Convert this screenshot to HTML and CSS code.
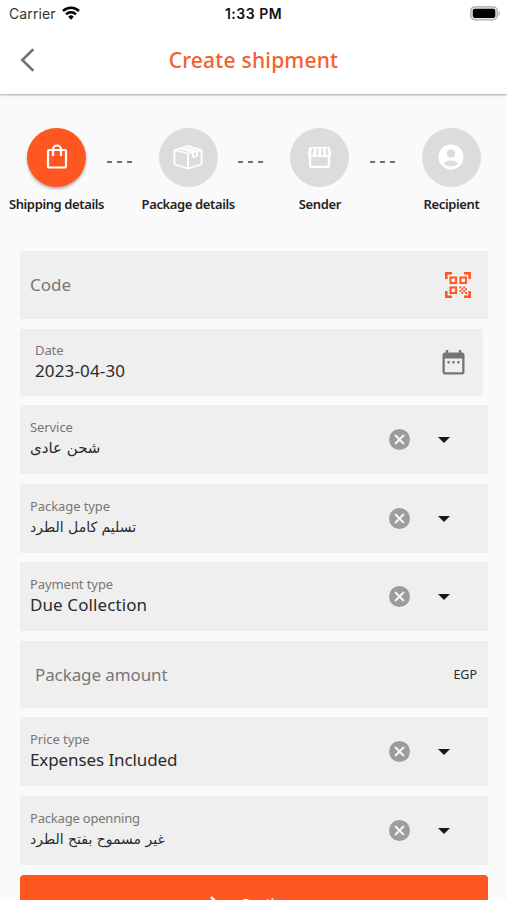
FILE: index.html
```html
<!DOCTYPE html>
<html lang="en">
<head>
<meta charset="utf-8">
<title>Create shipment</title>
<link rel="stylesheet" href="styles.css">
</head>
<body>
<svg class="defs" aria-hidden="true">
  <symbol id="clear" viewBox="2 2 20 20"><path fill="#9c9c9c" d="M12 2a10 10 0 1 0 0 20 10 10 0 0 0 0-20Z"/><path d="m7.800 7.800 8.400 8.400m0-8.400-8.400 8.400" stroke="#f5f5f5" stroke-width="2"/></symbol>
  <symbol id="caret" viewBox="0 0 12 6"><path fill="#171717" d="M0 0h12L6 6Z"/></symbol>
</svg>
<header class="top">
  <div class="status">
    <div class="carrier"><span class="carrier-name">Carrier</span>
      <svg class="wifi" viewBox="0 0 18 14"><g fill="none" stroke="#000" stroke-width="2.500"><path d="M1 5a11.400 11.400 0 0 1 16 0"/><path d="M4 8.300a7.200 7.200 0 0 1 10 0"/></g><path d="M6.200 10.700a4 4 0 0 1 5.600 0L9 13.700Z"/></svg>
    </div>
    <span class="clock">1:33 PM</span>
    <svg class="battery" viewBox="0 0 31 15"><rect x=".8" y=".8" width="26.400" height="13" rx="4" fill="#e8e8e8" stroke="#aaa" stroke-width="1.300"/><rect x="2.800" y="2.700" width="22.500" height="9.300" rx="2"/><path d="M28.500 5a3 3 0 0 1 0 5Z" fill="#aaa"/></svg>
  </div>
  <div class="bar">
    <svg class="back" viewBox="0 0 15 24"><path d="M13.300 1.200 2.300 12l11 10.800" fill="none" stroke="#757575" stroke-width="2.700"/></svg>
    <h1 class="title">Create shipment</h1>
  </div>
</header>
<main>
  <nav class="steps">
    <div class="step">
      <div class="disc active"><svg class="icon bag" viewBox="0 0 28 28"><g fill="none" stroke="#fff" stroke-width="2.200"><rect x="5" y="8" width="18" height="17.500" rx="1"/><path d="M10 14V7.500a4 4 0 0 1 8 0V14"/></g></svg></div>
      <span class="caption c1">Shipping details</span>
    </div>
    <div class="dashes"><i></i><i></i><i></i></div>
    <div class="step">
      <div class="disc"><svg class="icon wide" viewBox="0 0 30 28"><path d="m1.500 7 13.500-4 13.500 4v14.500L15 25.500 1.500 21.500Zm0 0L15 10.500 28.500 7M15 10.500v15M6.500 5.500l13.500 3.500v5l4-1.200V8L10.500 4.300" fill="none" stroke="#fff" stroke-width="1.800" stroke-linejoin="round"/></svg></div>
      <span class="caption c2">Package details</span>
    </div>
    <div class="dashes"><i></i><i></i><i></i></div>
    <div class="step">
      <div class="disc"><svg class="icon store" viewBox="0 0 28 28"><path d="M5 3.500h18.500q1.500 0 1.500 1.500l1 6q.3 3-2.500 3h-19Q1.700 14 2 11l1-6q0-1.500 2-1.500Z" fill="#fff"/><path d="m7.200 6-1 5.500M12 6l-.5 5.500M16.500 6l.5 5.500M21.300 6l1 5.500" stroke="#dcdcdc" stroke-width="2.100" stroke-linecap="round"/><path d="M4.200 13v10q0 1.300 1.300 1.300h17q1.300 0 1.300-1.300V13" fill="none" stroke="#fff" stroke-width="2.400"/></svg></div>
      <span class="caption c3">Sender</span>
    </div>
    <div class="dashes"><i></i><i></i><i></i></div>
    <div class="step">
      <div class="disc"><svg class="icon person" viewBox="0 0 28 28"><circle cx="14" cy="14" r="12.500" fill="#fff"/><circle cx="14" cy="10.500" r="4.200" fill="#dcdcdc"/><ellipse cx="14" cy="20.500" rx="6.800" ry="2.900" fill="#dcdcdc"/></svg></div>
      <span class="caption c4">Recipient</span>
    </div>
  </nav>
  <form class="form">
    <div class="field code"><span class="hint h-code">Code</span>
      <svg class="qr" viewBox="0 0 26 26"><g fill="none" stroke="#ff5722" stroke-width="2"><path stroke-width="2.600" d="M1.300 7V1.300H7M19 1.300h5.700V7M1.300 19v5.700H7M19 24.700h5.700V19"/><path d="M5.500 5.500h5.600v5.600H5.500Zm9.900 0H21v5.600h-5.600ZM5.500 15.400h5.600V21H5.500Z"/></g><path fill="#ff5722" d="M14.400 14.400h1.900v1.900h-1.900Zm3.800 0h1.900v1.900h-1.900Zm-1.900 1.900h1.900v1.900h-1.900Zm3.800 0H22v1.900h-1.900Zm-5.700 1.900h1.900v1.900h-1.900Zm3.800 0h1.900v1.900h-1.900Zm-1.900 1.900h1.900V22h-1.900Zm3.800 0H22V22h-1.900Z"/></svg></div>
    <div class="field date"><div class="text"><span class="label l-date">Date</span><span class="value v-date">2023-04-30</span></div>
      <svg class="cal" viewBox="0 0 23 25"><path fill="#757575" fill-rule="evenodd" d="M3.800 0h2.400v2.400h10.600V0h2.400v2.400h1.300Q22.500 2.400 22.500 5v17q0 2.500-2.500 2.500H3Q.5 24.500.5 22V5Q.5 2.400 3 2.400h.8ZM2.800 8.500v13.700h17.400V8.500Z"/><path fill="#757575" d="M5.500 11h2.200v2.400H5.500Zm4.900 0h2.200v2.400h-2.200Zm4.900 0h2.200v2.400h-2.200Z"/></svg></div>
    <div class="field service"><div class="text"><span class="label l-service">Service</span><span class="value arabic a-service" lang="ar" dir="rtl">شحن عادى</span></div><svg class="clear"><use href="#clear"/></svg><svg class="caret"><use href="#caret"/></svg></div>
    <div class="field package"><div class="text"><span class="label l-package">Package type</span><span class="value arabic a-package" lang="ar" dir="rtl">تسليم كامل الطرد</span></div><svg class="clear"><use href="#clear"/></svg><svg class="caret"><use href="#caret"/></svg></div>
    <div class="field payment"><div class="text"><span class="label l-payment">Payment type</span><span class="value v-payment">Due Collection</span></div><svg class="clear"><use href="#clear"/></svg><svg class="caret"><use href="#caret"/></svg></div>
    <div class="field amount"><span class="hint h-amount">Package amount</span><span class="currency">EGP</span></div>
    <div class="field price"><div class="text"><span class="label l-price">Price type</span><span class="value v-price">Expenses Included</span></div><svg class="clear"><use href="#clear"/></svg><svg class="caret"><use href="#caret"/></svg></div>
    <div class="field opening"><div class="text"><span class="label l-opening">Package openning</span><span class="value arabic a-opening" lang="ar" dir="rtl">غير مسموح بفتح الطرد</span></div><svg class="clear"><use href="#clear"/></svg><svg class="caret"><use href="#caret"/></svg></div>
    <button class="submit" type="button"><svg class="arrow" viewBox="0 0 16 20"><path d="m2 1 9 9-9 9" fill="none" stroke="#fff" stroke-width="2.500"/></svg><span>Continue</span></button>
  </form>
</main>
</body>
</html>
```
FILE: styles.css
```css
* { box-sizing: border-box; }
html, body { margin: 0; height: 900px; overflow: hidden; }
body { background: #fafafa; color: #2b2b2b; font-family: "Noto Sans", "DejaVu Sans", sans-serif; }
svg { display: block; flex: none; }
.defs { display: none; }

.top { height: 94px; background: #fff; box-shadow: 0 1px 2px rgba(0, 0, 0, .35); }
.status { display: grid; grid-template-columns: 1fr auto 1fr; height: 28px; padding: 0 6px 0 9px; align-items: center; color: #111; font: 14px/28px Inter, sans-serif; }
.carrier { display: flex; align-items: center; gap: 6px; }
.carrier-name { color: #333; letter-spacing: .1px; }
.wifi { width: 18px; height: 14px; margin-top: -2px; }
.clock { margin-left: -3px; font-weight: 600; font-size: 14px; letter-spacing: .5px; }
.battery { width: 31px; height: 15px; justify-self: end; margin-top: -1px; }
.bar { display: grid; grid-template-columns: 60px 1fr 60px; align-items: center; height: 64px; }
.back { width: 15px; height: 24px; margin-left: 20px; }
.title { margin: 0; color: #f4602f; font-size: 21px; font-weight: 500; line-height: 30px; letter-spacing: .2px; text-align: center; white-space: nowrap; }

.steps { display: flex; justify-content: space-between; height: 157px; padding: 34px 26px 0 27px; }
.step { display: flex; flex-direction: column; align-items: center; width: 59px; }
.disc { display: grid; place-items: center; flex: none; width: 59px; height: 59px; border-radius: 50%; background: #dcdcdc; }
.disc.active { background: #ff5722; box-shadow: 0 2px 3px rgba(0, 0, 0, .3); }
.icon { width: 28px; height: 28px; }
.icon.bag { margin-top: -3px; }
.icon.wide { width: 30px; margin-top: -1px; }
.icon.store { margin-top: -1px; width: 27px; }
.icon.person { margin-top: -1px; }
.caption { margin-top: 7px; color: #222; font-size: 13px; font-weight: 600; line-height: 20px; letter-spacing: -.38px; white-space: nowrap; }
.dashes { display: flex; gap: 5px; margin: 0 3px 0 -3px; padding-top: 33px; }
.dashes i { width: 5px; height: 2px; background: #707070; }

.form { display: flex; flex-direction: column; padding: 0 19px 0 20px; }
.field { display: flex; flex: none; align-items: center; height: 69px; margin-bottom: 10px; padding: 0 38px 0 10px; background: #efefef; }
.code { height: 68px; padding-right: 17px; }
.date { height: 67px; margin: 0 5px 9px 0; padding: 0 18px 0 15px; }
.package { margin-bottom: 9px; }
.amount { height: 67px; margin-bottom: 9px; padding: 0 10px 0 15px; }
.text { display: flex; flex: 1; flex-direction: column; align-items: flex-start; margin-top: -2px; }
.label { color: #777; font-size: 13px; line-height: 18px; letter-spacing: -.08px; white-space: nowrap; }
.l-opening { letter-spacing: -.2px; }
.value { font-size: 17px; line-height: 23px; white-space: nowrap; }
.v-date { letter-spacing: .15px; }
.v-payment { letter-spacing: .1px; }
.v-price { letter-spacing: -.1px; }
.arabic { padding-top: 2px; line-height: 21px; font-family: "DejaVu Sans", sans-serif; font-size: 14px; }
.a-service { font-size: 15px; }
.hint { flex: 1; color: #777; font-size: 17px; line-height: 24px; }
.h-amount { letter-spacing: -.1px; }
.currency { margin-right: 1px; font-size: 12.500px; }
.qr { width: 26px; height: 26px; }
.cal { width: 23px; height: 25px; }
.clear { width: 21px; height: 21px; margin-right: 28px; }
.caret { width: 12px; height: 6px; }
.submit { display: flex; flex: none; align-items: flex-start; justify-content: center; gap: 15px; height: 60px; padding: 18px 0 0; border: 0; border-radius: 4px; background: #ff5722; color: #fff; font: 500 14px/22px "Noto Sans", sans-serif; letter-spacing: -.3px; }
.arrow { width: 16px; height: 20px; margin-top: 3px; }
```
